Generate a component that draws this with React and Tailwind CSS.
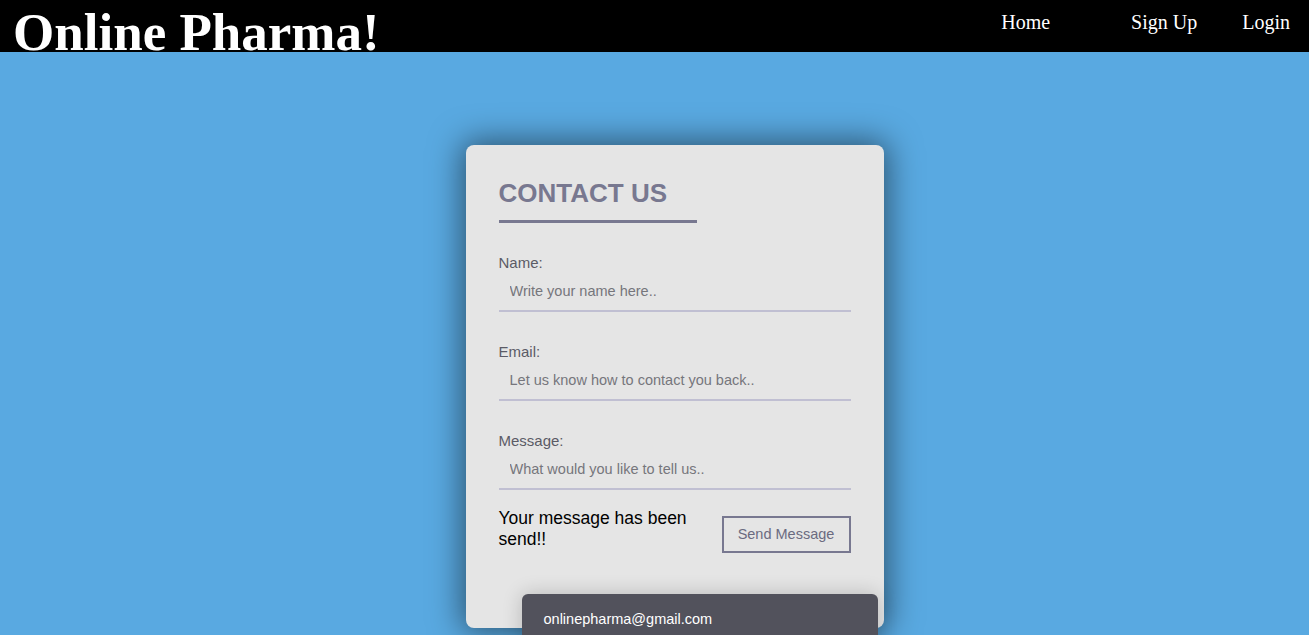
const fields = [
  { label: "Name:", placeholder: "Write your name here.." },
  { label: "Email:", placeholder: "Let us know how to contact you back.." },
  { label: "Message:", placeholder: "What would you like to tell us.." },
];

const Header = () => {
  return (
    <header className="h-[52px] bg-black flex items-start text-white font-['Liberation_Serif',serif]">
      <h1 className="pl-[13px] mt-[6px] text-[53px] leading-none font-bold whitespace-nowrap">
        Online Pharma!
      </h1>
      <nav className="ml-auto mt-[11px] pr-[19px] flex text-[20px] leading-[23px]">
        <a href="#" className="mr-[81px]">Home</a>
        <a href="#" className="mr-[45px]">Sign Up</a>
        <a href="#">Login</a>
      </nav>
    </header>
  );
};

const App = () => {
  return (
    <div className="h-screen overflow-hidden bg-[#59a9e1] font-['Liberation_Sans',Arial,sans-serif]">
      <Header />
      <main className="flex justify-center pt-[93px] pl-[40px]">
        <div className="relative w-[418px] h-[483px] bg-[#e5e5e5] rounded-[8px] px-[33px] pt-[33px] shadow-[0_0_32px_4px_rgba(0,0,0,0.5)]">
          <h2 className="text-[26px] leading-[31px] font-bold text-[#787890]">CONTACT US</h2>
          <div className="mt-[11px] h-[3px] w-[198px] bg-[#787890]"></div>

          <form className="mt-[31px] flex flex-col gap-[31px]">
            {fields.map((f) => (
              <div key={f.label} className="flex flex-col">
                <label className="text-[15px] leading-[17px] text-[#5b5b66]">{f.label}</label>
                <input
                  type="text"
                  placeholder={f.placeholder}
                  className="mt-[4px] h-[37px] w-full bg-transparent px-[11px] pb-[3px] text-[14.5px] text-[#555] placeholder:text-[#76767c] border-b-2 border-[#c0bfd2] outline-none"
                />
              </div>
            ))}
          </form>

          <div className="mt-[18px] flex items-start justify-between">
            <p className="w-[200px] text-[17.5px] leading-[21px] text-black">
              Your message has been send!!
            </p>
            <button className="mt-[8px] w-[129px] h-[37px] border-2 border-[#787890] text-[14.5px] text-[#6b6b80]">
              Send Message
            </button>
          </div>

          <div className="absolute left-[56px] top-[449px] w-[356px] h-[70px] bg-[#52525c] rounded-t-[6px] pl-[22px] pt-[17px] shadow-[0_0_20px_rgba(0,0,0,0.2)]">
            <p className="text-[14.5px] leading-[17px] text-white">onlinepharma@gmail.com</p>
          </div>
        </div>
      </main>
    </div>
  );
};

export default App;
